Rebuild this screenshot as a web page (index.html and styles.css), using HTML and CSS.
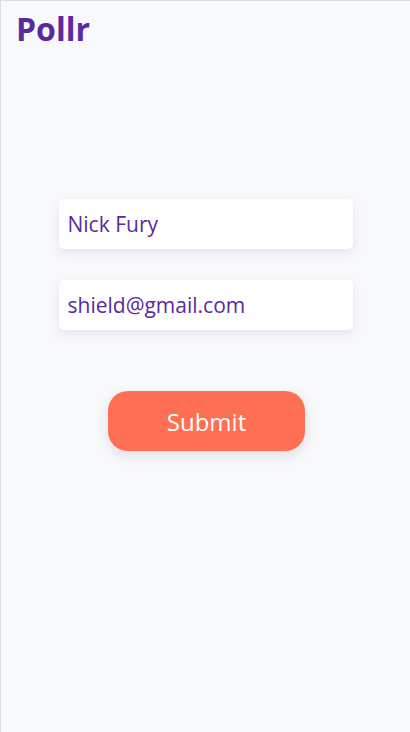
FILE: index.html
```html
<!DOCTYPE html>
<html>
<head>
<meta charset="utf-8">
<link rel="stylesheet" href="styles.css">
</head>
<body>
<div class="app">
  <header class="header"><h1 class="logo">Pollr</h1></header>
  <form class="form">
    <input class="field" type="text" value="Nick Fury">
    <input class="field" type="email" value="shield@gmail.com">
    <button class="submit" type="button">Submit</button>
  </form>
</div>
</body>
</html>
```
FILE: styles.css
```css
html, body {
  margin: 0;
  padding: 0;
  height: 100%;
}
body {
  background: #f8f9fb;
  font-family: "Open Sans", sans-serif;
}
.app {
  box-sizing: border-box;
  height: 100%;
  border-top: 1px solid #dcdde0;
  border-left: 1px solid #dcdde0;
}
.header {
  padding: 6px 15px 0;
}
.logo {
  margin: 0;
  font-size: 32px;
  font-weight: 700;
  line-height: 44px;
  color: #5a2a9e;
}
.form {
  display: flex;
  flex-direction: column;
  align-items: center;
  padding-top: 148px;
  gap: 31px;
}
.field {
  box-sizing: border-box;
  width: 294px;
  height: 50px;
  border: none;
  border-radius: 5px;
  background: #fff;
  padding: 0 9px;
  font-family: "Open Sans", sans-serif;
  font-size: 21px;
  color: #5a2a9e;
  box-shadow: 0 4px 10px rgba(120, 110, 170, 0.15);
  outline: none;
}
.submit {
  margin-top: 30px;
  margin-left: 2px;
  width: 197px;
  height: 60px;
  border: none;
  border-radius: 20px;
  background: #ff6f53;
  color: #fff;
  font-family: "Open Sans", sans-serif;
  font-size: 24px;
  box-shadow: 0 4px 12px rgba(120, 110, 140, 0.2);
}
```
